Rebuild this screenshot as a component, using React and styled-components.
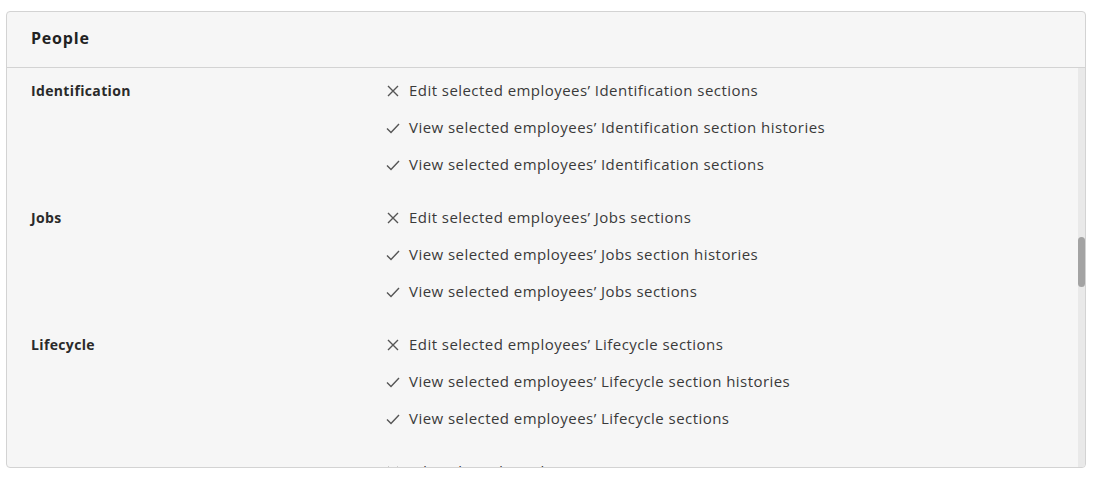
import React from 'react'
import styled, { createGlobalStyle } from 'styled-components'

const Global = createGlobalStyle`
  html, body {
    margin: 0;
    background: #ffffff;
  }
  body {
    font-family: "Open Sans", "Liberation Sans", sans-serif;
    color: #333333;
  }
`

const sections = [
  {
    name: 'Identification',
    perms: [
      { allowed: false, text: 'Edit selected employees\u2019 Identification sections' },
      { allowed: true, text: 'View selected employees\u2019 Identification section histories' },
      { allowed: true, text: 'View selected employees\u2019 Identification sections' },
    ],
  },
  {
    name: 'Jobs',
    perms: [
      { allowed: false, text: 'Edit selected employees\u2019 Jobs sections' },
      { allowed: true, text: 'View selected employees\u2019 Jobs section histories' },
      { allowed: true, text: 'View selected employees\u2019 Jobs sections' },
    ],
  },
  {
    name: 'Lifecycle',
    perms: [
      { allowed: false, text: 'Edit selected employees\u2019 Lifecycle sections' },
      { allowed: true, text: 'View selected employees\u2019 Lifecycle section histories' },
      { allowed: true, text: 'View selected employees\u2019 Lifecycle sections' },
    ],
  },
  {
    name: 'Names',
    perms: [
      { allowed: false, text: 'Edit selected employees\u2019 Names sections' },
    ],
  },
]

const Page = styled.div`
  padding: 11px 14px 10px 6px;
`

const Card = styled.section`
  position: relative;
  height: 457px;
  box-sizing: border-box;
  background: #f6f6f6;
  border: 1px solid #d3d3d3;
  border-radius: 4px;
  display: flex;
  flex-direction: column;
  overflow: hidden;
`

const Header = styled.header`
  height: 56px;
  box-sizing: border-box;
  flex-shrink: 0;
  display: flex;
  align-items: center;
  padding: 0 24px 3px;
  border-bottom: 1px solid #d3d3d3;
`

const Title = styled.h2`
  margin: 0;
  font-size: 16px;
  font-weight: 700;
  letter-spacing: 0.8px;
  color: #222222;
`

const Body = styled.div`
  flex: 1;
  overflow: hidden;
  padding: 12px 24px 0;
  display: flex;
  flex-direction: column;
  gap: 32px;
`

const Section = styled.div`
  display: grid;
  grid-template-columns: 354px 1fr;
  align-items: start;
`

const Label = styled.div`
  font-size: 14px;
  font-weight: 700;
  line-height: 21px;
  letter-spacing: 0.35px;
  color: #2a2a2a;
`

const PermList = styled.ul`
  list-style: none;
  margin: 0;
  padding: 0;
  display: flex;
  flex-direction: column;
  gap: 16px;
`

const Perm = styled.li`
  display: flex;
  align-items: center;
  gap: 8px;
  font-size: 15px;
  line-height: 21px;
  letter-spacing: 0.45px;
  color: #3a3a3a;
`

const IconBox = styled.span`
  width: 16px;
  height: 16px;
  display: inline-flex;
  align-items: center;
  justify-content: center;
  color: #555555;
`

const ScrollTrack = styled.div`
  position: absolute;
  right: 0;
  top: 56px;
  bottom: 0;
  width: 7px;
  background: #e9e9e9;
`

const ScrollThumb = styled.div`
  position: absolute;
  left: 0;
  right: 0;
  border-radius: 4px;
  background: #a3a3a3;
`

const Cross = () => (
  <svg width="12" height="12" viewBox="0 0 12 12" fill="none" stroke="currentColor" strokeWidth="1.4">
    <path d="M1 1L11 11M11 1L1 11" />
  </svg>
)

const Check = () => (
  <svg width="14" height="12" viewBox="0 0 14 12" fill="none" stroke="currentColor" strokeWidth="1.4">
    <path d="M1 6.5L5 10.5L13 2" />
  </svg>
)

export default function App() {
  return (
    <>
      <Global />
      <Page>
        <Card>
          <Header>
            <Title>People</Title>
          </Header>
          <Body>
            {sections.map((s) => (
              <Section key={s.name}>
                <Label>{s.name}</Label>
                <PermList>
                  {s.perms.map((p) => (
                    <Perm key={p.text}>
                      <IconBox>{p.allowed ? <Check /> : <Cross />}</IconBox>
                      {p.text}
                    </Perm>
                  ))}
                </PermList>
              </Section>
            ))}
          </Body>
          <ScrollTrack>
            <ScrollThumb style={{ top: 169, height: 50 }} />
          </ScrollTrack>
        </Card>
      </Page>
    </>
  )
}
